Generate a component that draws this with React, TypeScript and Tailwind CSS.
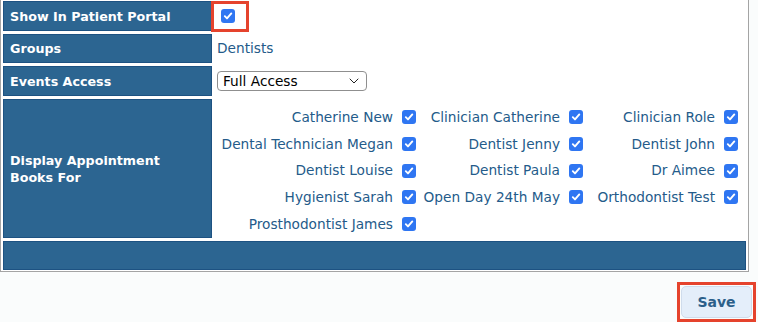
import { ChevronDown } from 'lucide-react';

const books = [
  'Catherine New', 'Clinician Catherine', 'Clinician Role',
  'Dental Technician Megan', 'Dentist Jenny', 'Dentist John',
  'Dentist Louise', 'Dentist Paula', 'Dr Aimee',
  'Hygienist Sarah', 'Open Day 24th May', 'Orthodontist Test',
  'Prosthodontist James',
];

const Check = () => (
  <span className="inline-flex w-[14px] h-[14px] shrink-0 items-center justify-center rounded-[3px] bg-[#2f76f2]">
    <svg width="10" height="10" viewBox="0 0 10 10">
      <path d="M1.8 5.2 L4 7.4 L8.3 2.4" fill="none" stroke="white" strokeWidth="1.9" strokeLinecap="round" strokeLinejoin="round" />
    </svg>
  </span>
);

const Label = ({ children, h }: { children: React.ReactNode; h: string }) => (
  <div className={`${h} bg-[#2c6591] border border-[#1d5282] flex items-center pl-[6px] text-white font-bold text-[12.7px] leading-[17px]`}>
    {children}
  </div>
);

export default function App() {
  return (
    <div className="w-[758px] h-[322px] bg-[#fafcfc] overflow-hidden font-['DejaVu_Sans',sans-serif] relative">
      <div className="w-[749px] bg-white border-x border-b border-[#a4a4a4] pt-[1px] px-[2px] pb-[1px]">
        <div className="grid grid-cols-[209px_1fr] gap-[3px]">
          <Label h="h-[30px]">Show In Patient Portal</Label>
          <div className="flex items-center pl-[6px]">
            <Check />
          </div>

          <Label h="h-[29px]">Groups</Label>
          <div className="flex items-center pl-[2px] text-[13.7px] text-[#245b8a]">Dentists</div>

          <Label h="h-[30px]">Events Access</Label>
          <div className="flex items-center pl-[2px]">
            <div className="w-[150px] h-[20px] border border-[#8f8f8f] rounded-[4px] flex items-center justify-between pl-[5px] pr-[4px] text-[13.7px] text-black">
              <span>Full Access</span>
              <ChevronDown size={16} strokeWidth={1.3} />
            </div>
          </div>

          <Label h="h-[139px]">
            <span>Display Appointment<br />Books For</span>
          </Label>
          <div className="pt-[5px] pr-[4px]">
            <div className="grid grid-cols-[205px_167px_155px] auto-rows-[26.7px]">
              {books.map((b) => (
                <div key={b} className="flex items-center justify-end pr-[4px] text-[13.7px] text-[#245b8a]">
                  <span>{b}</span>
                  <span className="ml-[9px] flex"><Check /></span>
                </div>
              ))}
            </div>
          </div>

          <div className="col-span-2 h-[29px] bg-[#2c6591] border border-[#1d5282]" />
        </div>
      </div>

      <div className="flex justify-end pr-[2px] pt-[10px]">
        <div className="border-[3px] border-[#e5432d] p-[1px]">
          <button className="w-[71px] h-[32px] rounded-[5px] bg-[#e4eefa] border border-[#cfdcec] text-[#2c5f8a] font-bold text-[14px]">
            Save
          </button>
        </div>
      </div>

      {/* annotation around the portal checkbox */}
      <div className="absolute left-[211px] top-[1px] w-[38px] h-[31px] border-[3px] border-[#e5432d]" />
    </div>
  );
}
